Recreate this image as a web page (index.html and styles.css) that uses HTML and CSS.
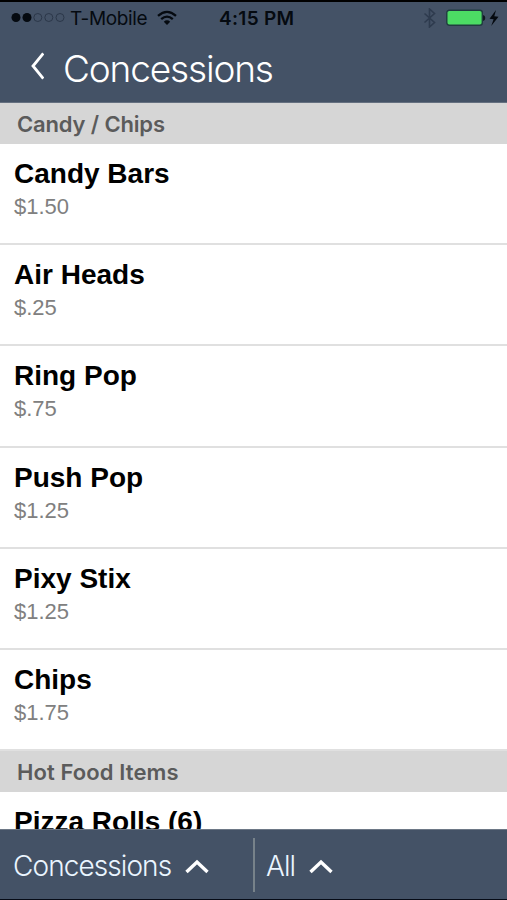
FILE: index.html
```html
<!DOCTYPE html>
<html lang="en">
<head>
<meta charset="utf-8">
<title>Concessions</title>
<link rel="stylesheet" href="styles.css">
</head>
<body>
<div class="app">
  <header class="header">
    <div class="status">
      <div class="carrier">
        <svg class="signal" width="54" height="12" viewBox="0 0 54 12"><g fill="#050a10"><circle cx="5" cy="5.5" r="4.5"/><circle cx="16" cy="5.5" r="4.5"/></g><g fill="none" stroke="#2b3749"><circle cx="26.8" cy="5.5" r="4"/><circle cx="37.8" cy="5.5" r="4"/><circle cx="49" cy="5.5" r="4"/></g></svg>
        <span class="network">T-Mobile</span>
        <svg class="wifi" width="20" height="16" viewBox="0 0 20 16"><g fill="none" stroke="#050a10" stroke-width="2.3"><path d="M1 5.8Q10-2 19 5.8"/><path d="M4.2 9.2Q10 4.1 15.8 9.2"/></g><path d="M6.8 11.7Q10 9 13.2 11.7L10 15Z" fill="#050a10"/></svg>
      </div>
      <time class="clock">4:15 PM</time>
      <div class="power">
        <svg class="bluetooth" width="14" height="20" viewBox="0 0 14 20"><path d="M1.5 5.5 11.5 14.5 6.5 19V1L11.5 5.5 1.5 14.5" fill="none" stroke="#2e3b4e" stroke-width="1.6"/></svg>
        <svg class="battery" width="40" height="18" viewBox="0 0 40 18"><rect x=".8" y="1.3" width="35.5" height="15" rx="2.5" fill="#4cdc64" stroke="#213c40" stroke-width="1.4"/><path d="M37 6q2.3.5 2.3 3T37 12Z" fill="#10191f"/></svg>
        <svg class="bolt" width="10" height="16" viewBox="0 0 10 16"><path d="M7 0 .5 8.8 4.6 9.3 2.2 16 9.5 6.8 5.3 6.3Z" fill="#050a10"/></svg>
      </div>
    </div>
    <div class="titlebar">
      <svg class="back" width="14" height="28" viewBox="0 0 14 28"><path d="M13.3 1.5 3 14 13.3 26.5" fill="none" stroke="#fff" stroke-width="2.8"/></svg>
      <h1 class="title">Concessions</h1>
    </div>
  </header>
  <main class="list">
    <h2 class="section">Candy / Chips</h2>
    <ul class="items">
      <li class="item"><span class="name">Candy Bars</span><span class="price">$1.50</span></li>
      <li class="item"><span class="name">Air Heads</span><span class="price">$.25</span></li>
      <li class="item"><span class="name">Ring Pop</span><span class="price">$.75</span></li>
      <li class="item"><span class="name">Push Pop</span><span class="price">$1.25</span></li>
      <li class="item"><span class="name">Pixy Stix</span><span class="price">$1.25</span></li>
      <li class="item"><span class="name">Chips</span><span class="price">$1.75</span></li>
    </ul>
    <h2 class="section hot">Hot Food Items</h2>
    <ul class="items">
      <li class="item"><span class="name">Pizza Rolls (6)</span></li>
    </ul>
  </main>
  <footer class="filters">
    <div class="filter category"><span class="label">Concessions</span><svg class="caret" width="24" height="16" viewBox="0 0 24 16"><path d="M1.5 14 12 4 22.5 14" fill="none" stroke="#fff" stroke-width="3.4"/></svg></div>
    <div class="filter scope"><span class="label">All</span><svg class="caret" width="24" height="16" viewBox="0 0 24 16"><path d="M1.5 14 12 4 22.5 14" fill="none" stroke="#fff" stroke-width="3.4"/></svg></div>
  </footer>
</div>
</body>
</html>
```
FILE: styles.css
```css
* { box-sizing: border-box; }
body { margin: 0; background: #fff; font-family: Inter, sans-serif; }
h1, h2, ul { margin: 0; padding: 0; }
svg { display: block; flex: none; }
.app { height: 900px; display: flex; flex-direction: column; overflow: hidden; }
.header { flex: none; height: 103px; background: #445266; border-top: 2px solid #000; border-bottom: 1px solid #657080; }
.status { height: 32px; display: grid; grid-template-columns: 219px 1fr auto; align-items: center; color: #050a10; }
.carrier, .power { display: flex; align-items: center; }
.carrier { padding-left: 11px; }
.network { font-size: 19px; margin-left: 5px; letter-spacing: -.35px; white-space: nowrap; width: 78px; }
.wifi { margin-left: 9px; }
.clock { font-size: 19px; font-weight: 600; letter-spacing: .3px; white-space: nowrap; }
.power { padding-right: 8px; }
.battery { margin-left: 9px; }
.bolt { margin-left: 3px; }
.titlebar { height: 68px; display: flex; align-items: center; padding-left: 30px; }
.back { margin-bottom: 5px; }
.title { margin: 2px 0 0 19px; color: #fff; font-size: 37px; font-weight: 300; line-height: 44px; letter-spacing: -1.15px; }
.list { flex: 1; min-height: 0; overflow: hidden; }
.section { height: 41px; padding-left: 17px; background: #d6d6d6; color: #5b5b5b; font-size: 22px; line-height: 42px; font-weight: 600; letter-spacing: -.15px; }
.hot { letter-spacing: .1px; }
.items { list-style: none; }
.item { height: 101.2px; padding: 14px 14px 0; border-bottom: 2px solid #e0e0e0; }
.name, .price { display: block; width: max-content; white-space: nowrap; }
.name { color: #000; font: bold 28px/32px "Liberation Sans", sans-serif; }
.price { margin-top: 3px; color: #808080; font: 22px/28px "Liberation Sans", sans-serif; }
.filters { flex: none; height: 71px; background: #445266; border-top: 1px solid #6d7886; border-bottom: 1px solid #060b16; display: flex; align-items: center; }
.filter { display: flex; align-items: center; height: 54px; }
.category { width: 255px; padding-left: 13px; border-right: 2px solid #77828a; }
.scope { padding-left: 11px; }
.label { padding-top: 2px; color: #eaf5ff; font-size: 28px; font-weight: 300; letter-spacing: -.92px; white-space: nowrap; }
.caret { margin: 2px 0 0 13.5px; }
```
